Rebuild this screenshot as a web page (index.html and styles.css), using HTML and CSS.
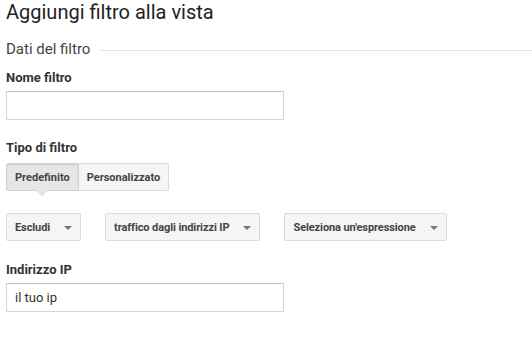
FILE: index.html
```html
<!DOCTYPE html>
<html lang="it">
<head>
  <meta charset="UTF-8">
  <title>Aggiungi filtro alla vista</title>
  <link rel="stylesheet" href="styles.css">
</head>
<body>
  <div class="page">
    <h1 class="title">Aggiungi filtro alla vista</h1>
    <div class="section-head">
      <span>Dati del filtro</span>
      <div class="rule"></div>
    </div>

    <div class="field">
      <label class="label" for="filter-name">Nome filtro</label>
      <input type="text" id="filter-name" class="input-field">
    </div>

    <div class="field field-type">
      <div class="label">Tipo di filtro</div>
      <div class="toggle">
        <button type="button" class="toggle-btn active">Predefinito</button>
        <button type="button" class="toggle-btn">Personalizzato</button>
      </div>
    </div>

    <div class="selects">
      <button type="button" class="dropdown">Escludi<span class="caret"></span></button>
      <button type="button" class="dropdown">traffico dagli indirizzi IP<span class="caret"></span></button>
      <button type="button" class="dropdown">Seleziona un'espressione<span class="caret"></span></button>
    </div>

    <div class="field field-ip">
      <label class="label" for="ip">Indirizzo IP</label>
      <input type="text" id="ip" class="input-field" value="il tuo ip">
    </div>
  </div>
</body>
</html>
```

FILE: styles.css
```css
body {
  margin: 0;
  padding: 0;
  background: #fff;
  font-family: Roboto, "Liberation Sans", Arial, sans-serif;
  color: #333;
}
.page {
  padding: 0 6px;
}
.title {
  margin: 0;
  font-size: 20px;
  font-weight: 400;
  line-height: 24px;
  color: #222;
}
.section-head {
  display: flex;
  align-items: center;
  margin-top: 16px;
  font-size: 15px;
  line-height: 18px;
  color: #444;
}
.rule {
  flex: 1;
  height: 1px;
  margin: 3px -6px 0 10px;
  background: #e3e3e3;
}
.field {
  margin-top: 12px;
}
.label {
  display: block;
  font-size: 13px;
  font-weight: 700;
  line-height: 16px;
  color: #333;
  margin-bottom: 5px;
}
.input-field {
  display: block;
  box-sizing: border-box;
  width: 278px;
  height: 29px;
  margin: 0;
  padding: 0 8px;
  border: 1px solid #d4d4d4;
  border-top-color: #c0c0c0;
  border-radius: 1px;
  font-family: inherit;
  font-size: 13px;
  color: #333;
  outline: none;
}
.field-type {
  margin-top: 20px;
}
.field-type .label {
  margin-bottom: 7px;
}
.toggle {
  display: flex;
}
.toggle-btn {
  position: relative;
  height: 28px;
  padding: 0 8px;
  margin: 0;
  border: 1px solid #dcdcdc;
  background: #f5f5f5;
  font-family: inherit;
  font-size: 11px;
  font-weight: 700;
  color: #444;
  border-radius: 2px;
}
.toggle-btn + .toggle-btn {
  border-left: none;
  border-radius: 0 2px 2px 0;
}
.toggle-btn.active {
  background: #e6e6e6;
  border-color: #d0d0d0;
  border-radius: 2px 0 0 2px;
  box-shadow: inset 0 1px 2px rgba(0, 0, 0, 0.1);
}
.toggle-btn.active::after {
  content: "";
  position: absolute;
  left: 50%;
  top: 100%;
  margin-left: -6px;
  border-left: 6px solid transparent;
  border-right: 6px solid transparent;
  border-top: 7px solid #e3e3e3;
}
.selects {
  display: flex;
  gap: 24px;
  margin-top: 22px;
}
.dropdown {
  display: flex;
  align-items: center;
  height: 28px;
  padding: 0 8px 0 8px;
  margin: 0;
  border: 1px solid #dcdcdc;
  border-radius: 2px;
  background: #f5f5f5;
  font-family: inherit;
  font-size: 11px;
  font-weight: 700;
  letter-spacing: -0.1px;
  color: #444;
}
.caret {
  width: 0;
  height: 0;
  margin-left: 14px;
  margin-top: 2px;
  border-left: 4px solid transparent;
  border-right: 4px solid transparent;
  border-top: 4px solid #777;
}
.field-ip {
  margin-top: 21px;
}
```
